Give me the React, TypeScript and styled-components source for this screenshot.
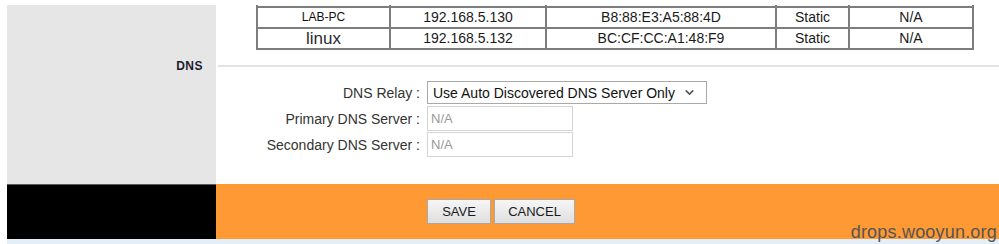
import React from "react";
import styled, { createGlobalStyle } from "styled-components";
import { ChevronDown } from "lucide-react";

const GlobalStyle = createGlobalStyle`
  *, *::before, *::after {
    box-sizing: border-box;
  }
  html, body {
    margin: 0;
    padding: 0;
    background: #ffffff;
    font-family: "Liberation Sans", Arial, sans-serif;
  }
`;

const hosts = [
  { name: "LAB-PC", ip: "192.168.5.130", mac: "B8:88:E3:A5:88:4D", type: "Static", lease: "N/A", big: false },
  { name: "linux", ip: "192.168.5.132", mac: "BC:CF:CC:A1:48:F9", type: "Static", lease: "N/A", big: true },
];

const widths = [133, 156, 230, 73, 124];

function App() {
  return (
    <Page>
      <GlobalStyle />
      <Body>
        <Side />
        <Main>
          <HostTable>
            <colgroup>
              {widths.map((w, i) => (
                <col key={i} style={{ width: w }} />
              ))}
            </colgroup>
            <tbody>
              <StubRow>
                {widths.map((_, i) => (
                  <td key={i} />
                ))}
              </StubRow>
              {hosts.map((h) => (
                <tr key={h.name}>
                  <NameCell $big={h.big}>{h.name}</NameCell>
                  <td>{h.ip}</td>
                  <td>{h.mac}</td>
                  <td>{h.type}</td>
                  <td>{h.lease}</td>
                </tr>
              ))}
            </tbody>
          </HostTable>
        </Main>

        <Side>
          <SectionTitle>DNS</SectionTitle>
        </Side>
        <Main>
          <Divider />
        </Main>

        <Side />
        <Main>
          <Form>
            <Label>DNS Relay :</Label>
            <Select>
              <span>Use Auto Discovered DNS Server Only</span>
              <ChevronDown size={13} strokeWidth={3} color="#555" />
            </Select>
            <Label>Primary DNS Server :</Label>
            <TextBox>N/A</TextBox>
            <Label>Secondary DNS Server :</Label>
            <TextBox>N/A</TextBox>
          </Form>
        </Main>
      </Body>

      <Footer>
        <FooterSide />
        <FooterMain>
          <Button>SAVE</Button>
          <Button>CANCEL</Button>
        </FooterMain>
        <Watermark>drops.wooyun.org</Watermark>
      </Footer>
      <BottomStrip />
    </Page>
  );
}

export default App;

const Page = styled.div`
  width: 999px;
  height: 244px;
  padding: 5px 0 0 7px;
  overflow: hidden;
  position: relative;
`;

const Body = styled.div`
  display: grid;
  grid-template-columns: 209px 1fr;
  grid-template-rows: 45px 31px 103px;
`;

const Side = styled.div`
  background: #e6e6e6;
  display: flex;
  align-items: center;
  justify-content: flex-end;
  padding-right: 13px;
`;

const Main = styled.div`
  background: #ffffff;
  display: flex;
  align-items: flex-start;
`;

const HostTable = styled.table`
  margin-left: 40px;
  border-collapse: collapse;
  table-layout: fixed;
  width: 717px;
  color: #1a1a1a;
  font-size: 14px;

  td {
    border: 2px solid #7d7d7d;
    height: 21px;
    padding: 0;
    text-align: center;
    line-height: 19px;
    white-space: nowrap;
  }
`;

const StubRow = styled.tr`
  td {
    height: 2px;
    border-top: none;
    line-height: 0;
  }
`;

const NameCell = styled.td<{ $big: boolean }>`
  font-size: ${(p) => (p.$big ? "17px" : "12px")};
  color: ${(p) => (p.$big ? "#2a2a33" : "#111")};
`;

const SectionTitle = styled.div`
  font-size: 12px;
  font-weight: bold;
  color: #1c1c30;
  letter-spacing: 0.5px;
`;

const Divider = styled.div`
  align-self: center;
  width: 100%;
  height: 2px;
  margin-left: 2px;
  background: #e3e3e3;
`;

const Form = styled.div`
  display: grid;
  grid-template-columns: 204px auto;
  column-gap: 7px;
  row-gap: 1px;
  align-items: center;
  font-size: 14px;
  color: #333;
`;

const Label = styled.div`
  text-align: right;
  white-space: nowrap;
`;

const Select = styled.div`
  width: 280px;
  height: 23px;
  border: 1px solid #a9a9a9;
  background: #fff;
  display: flex;
  align-items: center;
  justify-content: space-between;
  padding: 0 10px 0 5px;
  color: #111;
  margin-bottom: 1px;
`;

const TextBox = styled.div`
  width: 146px;
  height: 25px;
  border: 1px solid #d4d4d4;
  display: flex;
  align-items: center;
  padding-left: 3px;
  color: #999;
  font-size: 13px;
`;

const Footer = styled.div`
  display: grid;
  grid-template-columns: 209px 1fr;
  height: 55px;
`;

const FooterSide = styled.div`
  background: #000;
  border-top: 1px solid #5a5a5a;
`;

const FooterMain = styled.div`
  background: #ff9933;
  display: flex;
  align-items: flex-start;
  gap: 3px;
  padding: 15px 0 0 211px;
`;

const Button = styled.button`
  height: 25px;
  padding: 0 12px;
  border: 1px solid #a8a8a8;
  background: linear-gradient(#f6f6f6, #dedede);
  font-family: "Liberation Sans", Arial, sans-serif;
  font-size: 13px;
  color: #1a1a1a;
  &:first-child {
    width: 64px;
  }
  &:last-child {
    width: 81px;
  }
`;

const Watermark = styled.div`
  position: absolute;
  right: 2px;
  bottom: 1px;
  font-size: 18px;
  color: #555;
  letter-spacing: 0.2px;
`;

const BottomStrip = styled.div`
  height: 5px;
  background: #e4eef8;
`;
